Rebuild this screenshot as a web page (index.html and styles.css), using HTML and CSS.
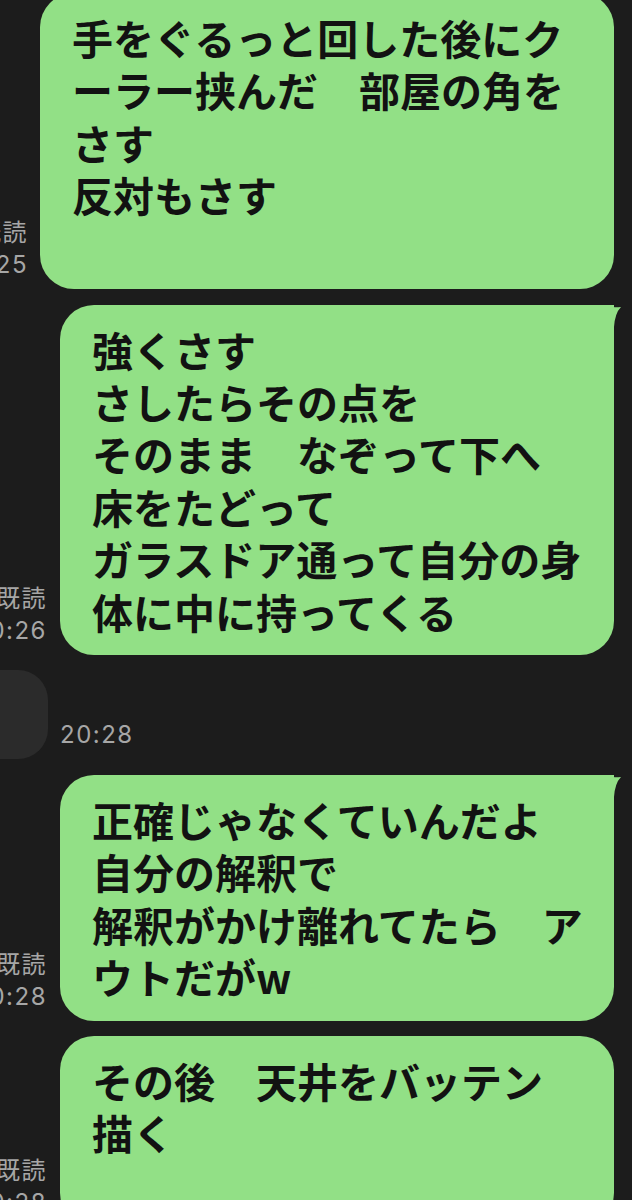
FILE: index.html
```html
<!DOCTYPE html>
<html lang="ja">
<head>
  <meta charset="UTF-8">
  <title>トーク</title>
  <link rel="stylesheet" href="styles.css">
</head>
<body>

  <div class="chat">

    <div class="row out first">
      <div class="meta">既読<br>20:25</div>
      <div class="bubble wide extra">手をぐるっと回した後にク<br>ーラー挟んだ　部屋の角を<br>さす<br>反対もさす</div>
    </div>

    <div class="row out">
      <div class="meta">既読<br>20:26</div>
      <div class="bubble tail">
        強くさす<br>さしたらその点を<br>そのまま　なぞって下へ<br>床をたどって<br>ガラスドア通って自分の身<br>体に中に持ってくる
        <svg class="tail-mark" width="30" height="30" viewBox="0 0 30 30"><path d="M0 0 H4 Q18 3 29 2 Q23 8 22 22 V30 H0 Z"/></svg>
      </div>
    </div>

    <div class="row in">
      <div class="bubble-in"></div>
      <div class="meta">20:28</div>
    </div>

    <div class="row out">
      <div class="meta">既読<br>20:28</div>
      <div class="bubble tail">
        正確じゃなくていんだよ<br>自分の解釈で<br>解釈がかけ離れてたら　ア<br>ウトだがw
        <svg class="tail-mark" width="30" height="30" viewBox="0 0 30 30"><path d="M0 0 H4 Q18 3 29 2 Q23 8 22 22 V30 H0 Z"/></svg>
      </div>
    </div>

    <div class="row out">
      <div class="meta">既読<br>20:28</div>
      <div class="bubble extra">その後　天井をバッテン<br>描く</div>
    </div>

  </div>

</body>
</html>
```

FILE: styles.css
```css
html {
  background: #1c1c1c;
}
body {
  margin: 0;
  background: #1c1c1c;
  font-family: "Noto Sans CJK JP", sans-serif;
  overflow: hidden;
}
.chat {
  display: flex;
  flex-direction: column;
  gap: 15.5px;
  margin-top: -7px;
  padding-right: 18px;
}
.row {
  display: flex;
  align-items: flex-end;
  gap: 13px;
}
.row.out {
  justify-content: flex-end;
}
.row.first {
  gap: 12px;
}
.row.in {
  justify-content: flex-start;
  gap: 12px;
}
.meta {
  flex-shrink: 0;
  padding-bottom: 8px;
  font-family: Inter, "Noto Sans CJK JP", sans-serif;
  font-size: 24px;
  line-height: 32px;
  letter-spacing: 1.5px;
  color: #a6a6a6;
  text-align: right;
  white-space: nowrap;
}
.bubble {
  position: relative;
  flex-shrink: 0;
  box-sizing: border-box;
  width: 554px;
  padding: 18px 22px 18px 32px;
  background: #92e086;
  border-radius: 34px;
  color: #121212;
  font-size: 41px;
  font-weight: 600;
  line-height: 52.4px;
  white-space: nowrap;
}
.bubble.wide {
  width: 574px;
}
.bubble.extra {
  padding-bottom: 68.4px;
}
.bubble.tail {
  border-top-right-radius: 0;
}
.tail-mark {
  position: absolute;
  top: 0;
  right: -8px;
  fill: #92e086;
}
.bubble-in {
  flex-shrink: 0;
  width: 160px;
  height: 89px;
  margin-left: -112px;
  background: #2b2b2b;
  border-radius: 30px;
}
```
